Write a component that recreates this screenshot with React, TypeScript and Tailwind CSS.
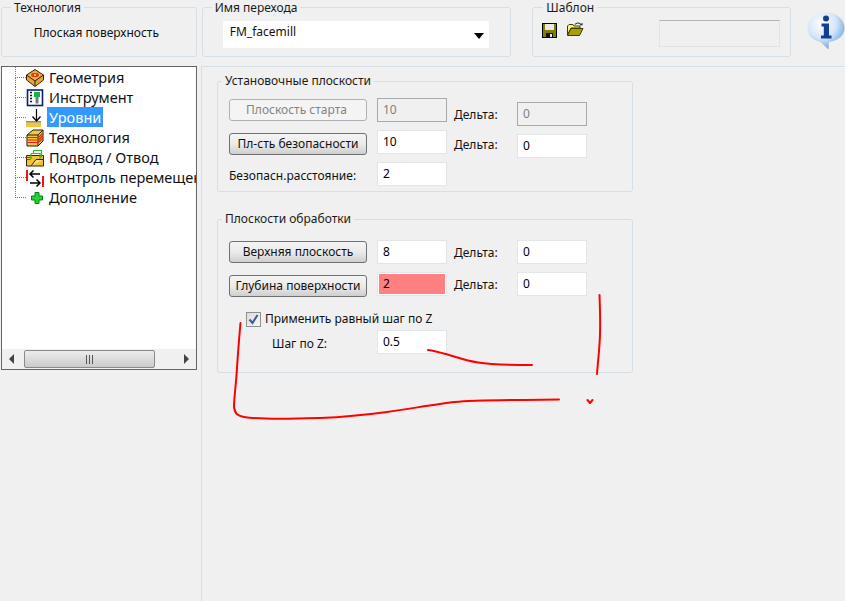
import React from "react";

const FONT = "font-['Noto_Sans','Liberation_Sans',sans-serif]";

function Group({ title, className, legend, children }: { title: string; className: string; legend: string; children?: React.ReactNode }) {
  return (
    <div className={`relative rounded-[3px] border border-[#d5dfe5] ${className}`}>
      <div className={`absolute ${legend} bg-[#f0f0f0] px-[3px] text-[12px] leading-[15px] whitespace-nowrap text-[#1a1a1a]`}>{title}</div>
      {children}
    </div>
  );
}

function Btn({ label, disabled }: { label: string; disabled?: boolean }) {
  return (
    <button
      className={
        disabled
          ? "block h-[22px] w-[138px] rounded-[3px] border border-[#adb2b5] bg-[#f4f4f4] pr-[3px] text-[12px] text-[#838383]"
          : "block h-[22px] w-[138px] rounded-[3px] border border-[#707070] bg-gradient-to-b from-[#f4f4f4] via-[#ebebeb] to-[#cfcfcf] text-[12px] text-[#111]"
      }
    >
      {label}
    </button>
  );
}

function Field({ value, disabled, red, className }: { value: string; disabled?: boolean; red?: boolean; className?: string }) {
  return (
    <div
      className={`h-[24px] w-[70px] border p-px ${disabled ? "border-[#a9a9a9] bg-[#f0f0f0]" : "border-[#e2e5ea] bg-white"} ${className ?? ""}`}
    >
      <div className={`h-full pl-[4px] text-[12px] leading-[20px] ${disabled ? "text-[#808080]" : "text-black"} ${red ? "bg-[#ff8080]" : ""}`}>{value}</div>
    </div>
  );
}

function Delta({ value, disabled, top, field }: { value: string; disabled?: boolean; top: string; field: string }) {
  return (
    <>
      <div className={`ml-[7px] w-[63px] text-[12px] leading-[15px] text-[#111] ${top}`}>Дельта:</div>
      <Field value={value} disabled={disabled} className={field} />
    </>
  );
}

function GeometryIcon() {
  return (
    <svg width="18" height="18" viewBox="0 0 18 18">
      <path d="M9 .5 17.5 6v5L9 17.5.5 11V6z" fill="#e8a33d" stroke="#3a2500" />
      <path d="M.5 6 9 12l8.5-6" fill="none" stroke="#3a2500" />
      <path d="M9 12v5" stroke="#3a2500" />
      <path d="M9 2.5 15 6l-6 4-6-4z" fill="#f6c65a" />
      <ellipse cx="9" cy="6" rx="4" ry="2.3" fill="#e23b1a" />
      <circle cx="9" cy="6" r="1" fill="#ffe9a0" />
    </svg>
  );
}

function ToolIcon() {
  return (
    <svg width="18" height="18" viewBox="0 0 18 18">
      <rect x="1.5" y="1" width="15" height="15.5" fill="#fff" stroke="#0a1f6e" strokeWidth="1.6" />
      <path d="M4 3.5h2M4 6.5h2M4 9.5h2M4 12.5h2" stroke="#111" strokeWidth="1.4" />
      <rect x="8" y="3" width="6" height="5" fill="#19b34a" />
      <rect x="9.5" y="8" width="3" height="6.5" fill="#7a7a7a" />
    </svg>
  );
}

function LevelsIcon() {
  return (
    <svg width="18" height="18" viewBox="0 0 18 18">
      <path d="M10.5 0v11" stroke="#000" strokeWidth="1.2" />
      <path d="M6.5 7.5 10.5 12l4-4.5" fill="none" stroke="#000" strokeWidth="1.3" />
      <rect x="0" y="12.500" width="15" height="1" fill="#222" />
      <rect x="0" y="13.500" width="15" height="4.500" fill="#f2c53d" />
    </svg>
  );
}

function TechIcon() {
  return (
    <svg width="18" height="18" viewBox="0 0 18 18">
      <path d="M1 6 7 1h10v11l-5 5H1z" fill="#f6c544" stroke="#2a1c00" />
      <path d="M1 6h11v11M12 6l5-5" fill="none" stroke="#2a1c00" />
      <path d="M1.5 8.5h10M1.5 11h10M1.5 13.5h10M12.5 8.5l4-4M12.5 11l4-4M12.5 13.5l4-4" stroke="#e0261a" strokeWidth="1.2" />
    </svg>
  );
}

function ApproachIcon() {
  return (
    <svg width="18" height="18" viewBox="0 0 18 18">
      <path d="M.5 6.5h17V17H.5z" fill="#f3c13a" stroke="#3a2500" />
      <path d="M.5 8.5h5M.5 10.5h4" stroke="#c9321c" />
      <path d="M5 17 10 10.5h7.5" fill="#f8de84" stroke="#3a2500" />
      <path d="M5 4.5V10M5 4.5h9V10M7.5 1.5h8v7" fill="none" stroke="#1fc61f" strokeWidth="1.2" />
      <path d="M7.5 1.5v3" stroke="#1fc61f" strokeWidth="1.2" />
    </svg>
  );
}

function ControlIcon() {
  return (
    <svg width="18" height="18" viewBox="0 0 18 18">
      <rect x="0" y="1" width="2" height="11" fill="#f01414" />
      <rect x="16" y="7" width="2" height="11" fill="#f01414" />
      <path d="M14 5H4M7.5 1.5 4 5l3.5 3.500" fill="none" stroke="#000" strokeWidth="1.500" />
      <path d="M4 14h10M10.500 10.500 14 14l-3.500 3.500" fill="none" stroke="#000" strokeWidth="1.500" />
    </svg>
  );
}

function PlusIcon() {
  return (
    <svg width="18" height="18" viewBox="0 0 18 18">
      <path d="M9 3.500h4v3.500h3.500v4H13v3.500H9V11H5.500V7H9z" fill="#22d42a" stroke="#0a7d1c" />
    </svg>
  );
}

function SaveIcon() {
  return (
    <svg width="15" height="15" viewBox="0 0 15 15" shapeRendering="crispEdges">
      <rect x="0.500" y="0.500" width="13.500" height="14" fill="#808000" stroke="#000" />
      <rect x="3" y="1" width="8.500" height="6" fill="#e8e8e8" />
      <rect x="4" y="10" width="7" height="5" fill="#111" />
      <rect x="8" y="11" width="2" height="3" fill="#e8e8e8" />
    </svg>
  );
}

function OpenIcon() {
  return (
    <svg width="17" height="15" viewBox="0 0 17 15">
      <path d="M.500 4 2 2.500h4L7 4h6v2H4L.500 13z" fill="#fff27a" stroke="#3d3d00" />
      <path d="M.500 13.500 4 6.500h12l-3.500 7z" fill="#a8a000" stroke="#3d3d00" />
      <path d="M8 2.500C9.500 .500 12.500 .500 14 2.500" fill="none" stroke="#222" strokeWidth="1.100" />
      <path d="M12.500 3.200h3V.800z" fill="#222" />
    </svg>
  );
}

function InfoIcon() {
  return (
    <svg width="38" height="40" viewBox="0 0 38 40">
      <defs>
        <radialGradient id="bubble" cx="38%" cy="30%" r="72%">
          <stop offset="0%" stopColor="#ffffff" />
          <stop offset="55%" stopColor="#d4e6f8" />
          <stop offset="100%" stopColor="#6fa6e0" />
        </radialGradient>
      </defs>
      <path d="M19 .5C9 .5 .5 7 .5 16c0 7 5 12 13 14l8 7.500 .500-7.500C30 29 37.500 24 37.500 16 37.500 7 29 .5 19 .5z" fill="url(#bubble)" />
      <circle cx="19" cy="6.500" r="3" fill="#10408f" />
      <path d="M14.500 11.500h7.500v12h2.500v3H14v-3h2.800v-9h-2.300z" fill="#10408f" />
    </svg>
  );
}

const treeItems = [
  { label: "Геометрия", icon: <GeometryIcon /> },
  { label: "Инструмент", icon: <ToolIcon /> },
  { label: "Уровни", icon: <LevelsIcon />, active: true },
  { label: "Технология", icon: <TechIcon /> },
  { label: "Подвод / Отвод", icon: <ApproachIcon /> },
  { label: "Контроль перемещений", icon: <ControlIcon /> },
  { label: "Дополнение", icon: <PlusIcon /> },
];

function Tree() {
  return (
    <div className="ml-px flex h-[304px] w-[196px] flex-col border border-[#646464] bg-white">
      <div className="flex-1 overflow-hidden">
        {treeItems.map((it, i) => (
          <div key={it.label} className="flex h-[20px] items-center whitespace-nowrap">
            <div className="ml-[13px] h-full w-[11px] shrink-0">
              <div className="h-[11px] border-b border-l border-dotted border-[#777]" />
              {i < treeItems.length - 1 && <div className="h-[9px] border-l border-dotted border-[#777]" />}
            </div>
            <div className="mt-[2px] flex h-[18px] w-[18px] shrink-0 items-center justify-center">{it.icon}</div>
            <span
              className={`ml-[3px] px-[2px] text-[14.5px] leading-[20px] ${it.active ? "bg-[#3399ff] text-white" : "text-[#111]"}`}
            >
              {it.label}
            </span>
          </div>
        ))}
      </div>
      <div className="flex h-[20px] items-center bg-[#f0f0f0]">
        <div className="flex w-[22px] justify-center pr-[3px]">
          <div className="h-0 w-0 border-y-[5px] border-r-[5px] border-y-transparent border-r-[#444]" />
        </div>
        <div className="flex h-[18px] w-[131px] items-center justify-center gap-[2px] rounded-[2px] border border-[#8a8a8a] bg-gradient-to-b from-[#ececec] to-[#cbcbcb]">
          <div className="h-[9px] w-px bg-[#555]" />
          <div className="h-[9px] w-px bg-[#555]" />
          <div className="h-[9px] w-px bg-[#555]" />
        </div>
        <div className="flex flex-1 justify-end pr-[7px]">
          <div className="h-0 w-0 border-y-[5px] border-l-[5px] border-y-transparent border-l-[#444]" />
        </div>
      </div>
    </div>
  );
}

function Scribble() {
  return (
    <svg className="pointer-events-none absolute top-0 left-0" width="845" height="601" viewBox="0 0 845 601" fill="none" stroke="#ff0000" strokeWidth="2" strokeLinecap="round" strokeLinejoin="round">
      <path d="M240.500 323C239 340 238 352 237 368C236 385 234 398 234 407C235 414 238 416 244 417C262 420 290 419 320 418C345 417 365 415 387 412C410 409 435 404 455 402C475 400 500 400 559 399.500" />
      <path d="M428 350C436 351 442 353 449 355C459 358 467 361 478 362.500C495 365 512 365 532 365" />
      <path d="M599.500 295C600 310 600.500 320 600 335C599.500 350 598 360 597 374" />
      <path d="M587.500 400L590 403L592.500 400" />
    </svg>
  );
}

export default function App() {
  return (
    <div className={`relative h-[601px] w-[845px] overflow-hidden bg-[#f0f0f0] ${FONT}`}>
      <div className="flex h-[66px] items-start pt-[7px] pl-px">
        <Group title="Технология" className="flex h-[50px] w-[196px] items-center justify-center" legend="top-[-8px] left-[9px]">
          <span className="mr-[5px] pt-[2px] text-[12px] text-[#111]">Плоская поверхность</span>
        </Group>
        <Group title="Имя перехода" className="ml-[5px] h-[50px] w-[310px] pt-[13px] pl-[20px]" legend="top-[-8px] left-[9px]">
          <div className="flex h-[27px] w-[266px] items-center justify-between bg-white pr-[5px] pl-[7px] text-[12px] text-[#111]">
            <span className="pb-[5px]">FM_facemill</span>
            <div className="mt-[3px] h-0 w-0 border-x-[5px] border-t-[6px] border-x-transparent border-t-black" />
          </div>
        </Group>
        <Group title="Шаблон" className="ml-[21px] flex h-[50px] w-[259px] items-start pt-[12px] pl-[9px]" legend="top-[-8px] left-[10px]">
          <div className="mt-[3px]"><SaveIcon /></div>
          <div className="mt-[2px] ml-[10px]"><OpenIcon /></div>
          <div className="ml-[75px] h-[27px] w-[121px] border border-[#e3e3e3] border-t-[#b5b5b5]" />
        </Group>
        <div className="mt-[5px] ml-[16px]"><InfoIcon /></div>
      </div>

      <div className="flex h-[535px]">
        <div className="w-[201px] shrink-0">
          <Tree />
        </div>
        <div className="flex-1 border-t border-l border-[#d5dfe5] pt-[14px] pl-[15px]">
          <Group title="Установочные плоскости" className="h-[111px] w-[416px] pt-[16px] pl-[11px]" legend="top-[-9px] left-[4px]">
            <div className="flex items-start">
              <div className="mt-px"><Btn label="Плоскость старта" disabled /></div>
              <Field value="10" disabled className="ml-[10px]" />
              <Delta value="0" disabled top="mt-[9px]" field="mt-[4px]" />
            </div>
            <div className="mt-[4px] flex items-start">
              <div className="mt-[3px]"><Btn label="Пл-сть безопасности" /></div>
              <Field value="10" className="ml-[10px]" />
              <Delta value="0" top="mt-[7px]" field="mt-[4px]" />
            </div>
            <div className="mt-[4px] flex items-start">
              <div className="mt-[5px] w-[148px] text-[12px] text-[#111]">Безопасн.расстояние:</div>
              <Field value="2" />
            </div>
          </Group>
          <Group title="Плоскости обработки" className="mt-[27px] h-[154px] w-[416px] pt-[20px] pl-[11px]" legend="top-[-9px] left-[4px]">
            <div className="flex items-start">
              <div className="mt-px"><Btn label="Верхняя плоскость" /></div>
              <Field value="8" className="ml-[10px]" />
              <Delta value="0" top="mt-[5px]" field="" />
            </div>
            <div className="mt-[8px] flex items-start">
              <div className="mt-[3px]"><Btn label="Глубина поверхности" /></div>
              <Field value="2" red className="ml-[10px]" />
              <Delta value="0" top="mt-[5px]" field="" />
            </div>
            <div className="mt-[13px] ml-[17px] flex items-center">
              <div className="flex h-[15px] w-[15px] items-center justify-center border border-[#8e8f8f] bg-gradient-to-br from-[#dcdcdc] to-[#f7f7f7]">
                <svg width="11" height="11" viewBox="0 0 11 11" fill="none" stroke="#3d5a9c" strokeWidth="2">
                  <path d="M1.500 5.500 4.500 9 9.500 1" />
                </svg>
              </div>
              <span className="ml-[4px] text-[12px] text-[#111]">Применить равный шаг по Z</span>
            </div>
            <div className="mt-[2px] flex items-start">
              <div className="mt-[5px] w-[148px] pl-[43px] text-[12px] text-[#111]">Шаг по Z:</div>
              <Field value="0.5" />
            </div>
          </Group>
        </div>
      </div>
      <Scribble />
    </div>
  );
}
